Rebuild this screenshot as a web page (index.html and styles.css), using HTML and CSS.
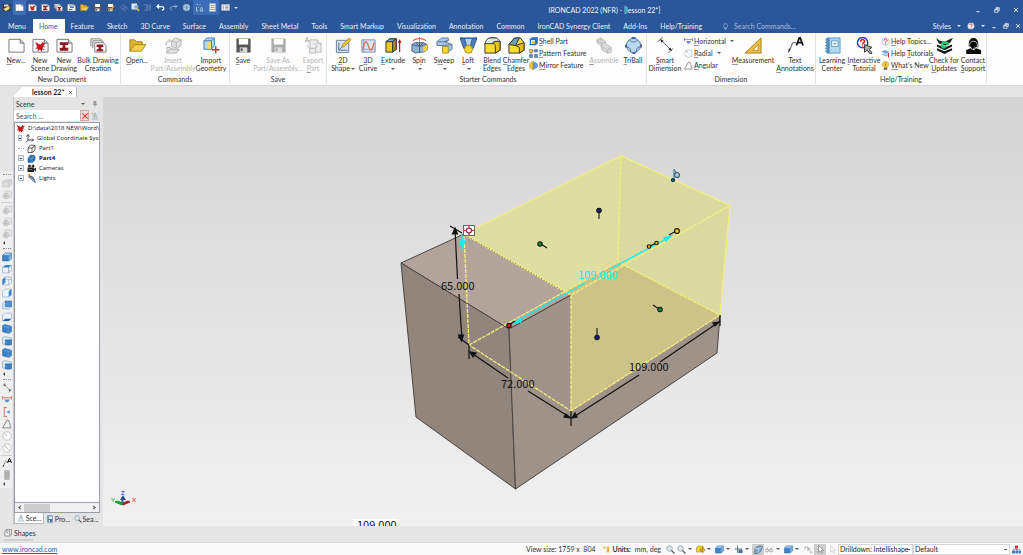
FILE: index.html
```html
<!DOCTYPE html>
<html lang="en">
<head>
<meta charset="utf-8">
<title>IRONCAD 2022 (NFR) - [lesson 22*]</title>
<link rel="stylesheet" href="styles.css">
</head>
<body>
<svg class="defs" aria-hidden="true">
  <symbol id="page" viewBox="0 0 18 18"><path d="M1 2.500h12l4 4v9.500H1z" fill="#fff" stroke="#777"/><path d="M13 2.500v4h4" fill="#ddd" stroke="#666"/></symbol>
  <symbol id="bird" viewBox="0 0 18 18"><path d="M1 1l6 4 3 1 3-4 2 2 3-1-2 3-2 3-1 3 4 3-5-1-1 3-2-3-4 3 1-4-5-1 4-2-3-2 3 0z" fill="#d01818"/><path d="M2 5l5 3M10 12l2 5M12 9l5 1" stroke="#501010" fill="none"/></symbol>
  <symbol id="nscene" viewBox="0 0 18 18"><use href="#page"/><svg x="2" y="4" width="13" height="12"><use href="#bird"/></svg></symbol>
  <symbol id="ndraw" viewBox="0 0 18 18"><use href="#page"/><path d="M4 5.500h9v3h-3v3h3v3H4v-3h3v-3H4z" fill="#901a22"/></symbol>
  <symbol id="bulk" viewBox="0 0 18 18"><path d="M1 10V2h10l3 3" fill="#fff" stroke="#777"/><path d="M3 12V4h9l3 3" fill="#fff" stroke="#777"/><path d="M5 16V6h9l3 3v7z" fill="#fff" stroke="#777"/><path d="M7 8h7v2.500h-2V13h2v2H7v-2h2v-2.500H7z" fill="#901a22"/></symbol>
  <symbol id="open" viewBox="0 0 18 18"><path d="M1 15V3h5l2 2h6v3" fill="#e0b52c" stroke="#a8841a"/><path d="M1 15l5-7h12l-5 7z" fill="#f5d04a" stroke="#a8841a"/></symbol>
  <symbol id="insert" viewBox="0 0 18 18"><g fill="#e2e2e2" stroke="#b4b4b4"><path d="M7 4l4-3 6 2v6l-4 3-6-2z"/><path d="M7 4l5 2v5M12 6l5-3M1 9c0-4 1-5 4-5M4 2l2 2-2 2M2 17v-6h4l2 2h4v1M2 17l3-4h10l-3 4z"/></g></symbol>
  <symbol id="import" viewBox="0 0 18 18"><path d="M1 4l3-3h8v8l-3 4H1z" fill="#b9d7ee" stroke="#3d7cb0"/><path d="M1 4h8v9M9 4l3-3" fill="none" stroke="#3d7cb0"/><path d="M5 5h3.500v7.500H5z" fill="#f7de63"/><path d="M13.500 9.500v8M9.500 13.500h8" stroke="#b43a3a" stroke-width="1.500"/></symbol>
  <symbol id="save" viewBox="0 0 18 18"><path d="M1.500 1.500h14l1 1v14h-15z" fill="#555"/><path d="M4 2h10v6H4z" fill="#fff"/><path d="M5 11h8v5.500H5z" fill="#ddd"/><path d="M6 12h2v3H6z" fill="#555"/></symbol>
  <symbol id="saveg" viewBox="0 0 18 18"><path d="M1.500 1.500h14l1 1v14h-15z" fill="#aaa"/><path d="M4 2h10v6H4z" fill="#fff"/><path d="M5 11h8v5.500H5z" fill="#ddd"/><path d="M6 12h2v3H6z" fill="#aaa"/></symbol>
  <symbol id="export" viewBox="0 0 18 18"><g fill="#eee" stroke="#b8b8b8"><path d="M5 3h8l4 4v9H6z"/><path d="M5 12v5h6v-5zM13 3v4h4M3 8c0 3 0 4 3 4M0 6l2-6 2 6M1 4h3M9 6l4 4-3 2"/></g></symbol>
  <symbol id="shape2d" viewBox="0 0 18 18"><path d="M1.500 3.500h13v13h-13z" fill="#d4e2f1" stroke="#667d98"/><path d="M4 6v8h9M4 14l5-5" fill="none" stroke="#58728f"/><path d="M7 11l1-3 7-7 2 2-7 7z" fill="#f1c232" stroke="#9a7a28" stroke-width=".7"/></symbol>
  <symbol id="curve" viewBox="0 0 18 18"><path d="M2 3h14v13H2z" fill="#d9e4f5" stroke="#7b8fb6"/><path d="M4 3v13M2 13h14" stroke="#8fa3c8"/><path d="M3 13c2-10 4-10 6-3s4 4 6-4" fill="none" stroke="#e2684a" stroke-width="1.300"/></symbol>
  <symbol id="extrude" viewBox="0 0 18 18"><path d="M1 5l4-3h7v11l-4 3H1z" fill="#efc71d" stroke="#333"/><path d="M1 5l4-3h7l-4 3z" fill="#74a6d8" stroke="#333"/><path d="M8 5l4-3v11l-4 3z" fill="#a8871d" stroke="#333"/><path d="M15.500 16V5" stroke="#c00" stroke-width="1.200"/><path d="M13.500 6l2-4 2 4z" fill="#c00"/></symbol>
  <symbol id="spin" viewBox="0 0 18 18"><path d="M1 8l4-2h8l4 2v6l-4 2H9l-4 1-4-2z" fill="#8fb3d8" stroke="#4a5f78"/><path d="M1 8l8 2 8-2M9 6v11M5 6l4 4 4-4" fill="none" stroke="#4a5f78"/><path d="M13 10l4-2v6l-4 2z" fill="#f5d52c"/><path d="M2 4c3-3 11-3 14 0" fill="none" stroke="#b03030"/><path d="M9 0v5" stroke="#888"/></symbol>
  <symbol id="sweep" viewBox="0 0 18 18"><path d="M1 5l5-4h7v3l-4 1 8 3v5l-5 3H7V9L1 9z" fill="#a9c7e4" stroke="#5a7796"/><path d="M7 9l10-1M1 5h7l5-1" fill="none" stroke="#5a7796"/><path d="M7 10h6v7H7z" fill="#f7d92f" stroke="#a98f20"/></symbol>
  <symbol id="loft" viewBox="0 0 18 18"><path d="M0 1h18l-4 11H4z" fill="#4c82bd" stroke="#2d5179"/><path d="M5 2h8l-2 8H7z" fill="#b7d3ec"/><path d="M0 1l5 1 2 8M18 1l-5 1-2 8" fill="none" stroke="#31577f"/><circle cx="9" cy="13" r="4.200" fill="#f8d931" stroke="#9d8519"/></symbol>
  <symbol id="blend" viewBox="0 0 18 18"><path d="M1 7l5-6h7l4 4v9l-5 3H1z" fill="#f8dc2e" stroke="#333"/><path d="M1 7c1-4 3-6 6-6h6c2 1 3 2 4 4-5-1-8 0-8 2z" fill="#dbe9f7" stroke="#333"/><path d="M9 7c3 0 3 1 3 4v6l5-3V5c-4-1-7 0-8 2z" fill="#e6c414" stroke="#333"/></symbol>
  <symbol id="chamfer" viewBox="0 0 18 18"><path d="M1 8l6-7h6l4 5v8l-5 3H1z" fill="#f8dc2e" stroke="#333"/><path d="M1 8l6-7h5L8 9z" fill="#6e9dce" stroke="#333"/><path d="M8 9l9-3v8l-5 3v-6z" fill="#e1bd15" stroke="#333"/></symbol>
  <symbol id="shell" viewBox="0 0 18 18"><path d="M2 4l4-3h11v12l-4 3H2z" fill="#2f74b8" stroke="#28598a"/><path d="M4 6h8v8H4z" fill="#dcecf8"/><path d="M6 8h6v6H6z" fill="#f0c828"/></symbol>
  <symbol id="pattern" viewBox="0 0 18 18"><path d="M1 1h6v6H1z" fill="#f6cf38" stroke="#555"/><path d="M11 1h6v5h-6zM1 11h6v6H1zM11 11h6v6h-6z" fill="#5c8dc6" stroke="#3c5b80"/><path d="M7 4h4M4 7v4" stroke="#444"/></symbol>
  <symbol id="mirror" viewBox="0 0 18 18"><path d="M8 1v16c-5 0-7-4-7-8s2-7 7-8z" fill="#f2c735" stroke="#a48125"/><path d="M10 3c5 0 7 2 7 6s-2 6-7 6z" fill="#68a0dc" stroke="#3c6ea4"/><path d="M9 0v18" stroke="#456"/></symbol>
  <symbol id="assemble" viewBox="0 0 18 18"><g fill="#dcdcdc" stroke="#b4b4b4"><path d="M1 3l4-2 5 4v2l6 4v5l-4 1-6-4v-3L1 6z"/><path d="M1 3l5 4 4-2M6 7v3l6 4 4-3M12 14v3M5 1v3"/></g></symbol>
  <symbol id="triball" viewBox="0 0 18 18"><circle cx="9" cy="9" r="7.500" fill="#b9d8f2" stroke="#4a7196"/><path d="M5 3c1 3 7 3 8 0M2 11c3-1 4 2 4 5M16 11c-3-1-4 2-4 5" fill="none" stroke="#4a7196"/><path d="M7 0h4v2H7zM0 8h2v3H0zM16 8h2v3h-2zM8 16h3v2H8z" fill="#3f6890"/></symbol>
  <symbol id="smart" viewBox="0 0 18 18"><path d="M4 3l11 11M1 5l5-5M12 17l5-5" stroke="#555"/><path d="M3 2l4 2-2 2zM16 15l-4-2 2-2z" fill="#222"/></symbol>
  <symbol id="horiz" viewBox="0 0 18 18"><path d="M1 2v6M17 2v6M1 5h16" stroke="#d86a58" stroke-width="1.600"/><path d="M4 8h10l-3 5H7z" fill="#5d90c9"/></symbol>
  <symbol id="vert" viewBox="0 0 18 18"><path d="M3 1h6M3 17h6M4 1v16" stroke="#d86a58" stroke-width="1.600"/><path d="M8 9l6-3v6z" fill="#5d90c9"/></symbol>
  <symbol id="radial" viewBox="0 0 18 18"><circle cx="9" cy="9" r="7.500" fill="#fff" stroke="#999"/><path d="M9 9L4 4" stroke="#777"/></symbol>
  <symbol id="diam" viewBox="0 0 18 18"><circle cx="9" cy="9" r="7.500" fill="#fff" stroke="#999"/><path d="M14 14L4 4" stroke="#777"/></symbol>
  <symbol id="angle" viewBox="0 0 18 18"><path d="M1 16L9 2l4 1M1 16h16M12 4c2 3 3 7 3 11" fill="none" stroke="#777" stroke-width="1.500"/></symbol>
  <symbol id="measure" viewBox="0 0 18 18"><path d="M0 17L17 1v16z" fill="#eebf41" stroke="#a97d1c"/><path d="M8 14l6-6v6z" fill="#fff" stroke="#b98d2c"/></symbol>
  <symbol id="annot" viewBox="0 0 18 18"><path d="M2 16L6 6h4" fill="none" stroke="#555"/><path d="M1 17l1-5 2 1z" fill="#333"/><path d="M10 9l3-8h1l3 8M11 6h5" fill="none" stroke="#111" stroke-width="1.800"/></symbol>
  <symbol id="book" viewBox="0 0 18 18"><path d="M3 1h14v16H3z" fill="#b2d7ee" stroke="#5c98bd"/><path d="M3 1h3v16H3z" fill="#528eb8"/><path d="M8 4h7v6H8z" fill="#eaf6fc" stroke="#6ba3c5"/><path d="M10 7h3M1 3h3M1 6h3M1 9h3M1 12h3M1 15h3" stroke="#498bba"/></symbol>
  <symbol id="tutor" viewBox="0 0 18 18"><circle cx="7" cy="6" r="5.500" fill="#fff" stroke="#2934cf" stroke-width="1.500"/><path d="M5 5c0-3 4-3 4 0 0 1-2 1-2 3M7 9v1" fill="none" stroke="#e01818" stroke-width="1.600"/><path d="M9 8l8 3-3 2 3 4-2 1-3-4-3 2z" fill="#aaa" stroke="#333"/></symbol>
  <symbol id="help" viewBox="0 0 18 18"><circle cx="9" cy="9" r="7.500" fill="#eef5fb" stroke="#85a9c8"/><path d="M6 7c0-4 6-4 6 0 0 2-3 2-3 4M9 13v2" fill="none" stroke="#d33" stroke-width="2"/></symbol>
  <symbol id="cap" viewBox="0 0 18 18"><path d="M0 5l8-3 10 4-8 4z" fill="#75a8dc"/><path d="M3 8l7 3 5-2v4l-5 2-7-3z" fill="#9cc3e8"/><path d="M15 8v9" stroke="#c33" stroke-width="2"/></symbol>
  <symbol id="bulb" viewBox="0 0 18 18"><path d="M6 13C0 8 3 1 9 1s9 7 3 12z" fill="#f6ce28" stroke="#a37f13"/><path d="M9 4v6M6 14h6v3H6z" stroke="#555" fill="#777"/></symbol>
  <symbol id="check" viewBox="0 0 18 18"><path d="M1 8l8 3 8-3v2l-8 4-8-4zM1 12l8 3 8-3v2l-8 4-8-4z" fill="#141414"/><path d="M0 1l4 3 5 1 6-3 3-1-3 5-5 3-7-2z" fill="#222"/><path d="M5 9c0-6 8-6 9-1l-2 1c-1-2-4-2-5 0h5c-1 4-6 5-7 0z" fill="#22c56a"/></symbol>
  <symbol id="contact" viewBox="0 0 18 18"><path d="M4 7c0-8 10-8 10 0v4h-2c-2 3-5 2-6-1H4zM1 18v-4l5-2 3 2 3-2 5 2v4z" fill="#080808"/><path d="M5 9c-1-6 9-6 8 0v2l-4 1M1 18v-3" stroke="#fff" stroke-width=".8" fill="none"/></symbol>
  <symbol id="cube" viewBox="0 0 18 18"><path d="M1 6l5-4h11v10l-5 4H1z" fill="#3c83cb" stroke="#2b639e"/><path d="M1 6l5-4h11l-5 4z" fill="#b7d7f2" stroke="#4c81b2"/><path d="M12 6l5-4v10l-5 4z" fill="#78addd"/></symbol>
  <symbol id="cubetop" viewBox="0 0 18 18"><path d="M1 6h11v10H1zM12 6l5-4v10l-5 4z" fill="#edf4fa" stroke="#7ba0c4"/><path d="M1 6l5-4h11l-5 4z" fill="#3c83cb"/></symbol>
  <symbol id="cubeleft" viewBox="0 0 18 18"><path d="M1 6l5-4h11v10l-5 4H1z" fill="#edf4fa" stroke="#7ba0c4"/><path d="M12 16V6h5M5 6h7" fill="none" stroke="#7ba0c4"/><path d="M1 6l5-4v10l-5 4z" fill="#3c83cb"/></symbol>
  <symbol id="cuberight" viewBox="0 0 18 18"><path d="M1 6l5-4h11v10l-5 4H1z" fill="#edf4fa" stroke="#7ba0c4"/><path d="M12 6l5-4v10l-5 4z" fill="#3c83cb"/></symbol>
  <symbol id="cubeback" viewBox="0 0 18 18"><path d="M1 6l5-4h11v10l-5 4H1z" fill="#d9e8f5" stroke="#7ba0c4"/><path d="M6 2h11v10H6z" fill="#4c8fd3" stroke="#2b639e"/></symbol>
  <symbol id="cubebot" viewBox="0 0 18 18"><path d="M1 6l5-4h11v10l-5 4H1z" fill="#edf4fa" stroke="#7ba0c4"/><path d="M1 16l5-4h11l-5 4z" fill="#245fa3"/></symbol>
  <symbol id="cubeiso" viewBox="0 0 18 18"><path d="M1 3l4-2 12 3v10l-5 3-11-3z" fill="#3a82cc" stroke="#27619d"/><path d="M1 3l10 3 6-2M11 6v11" fill="none" stroke="#7bb1e5"/></symbol>
  <symbol id="cubemix" viewBox="0 0 18 18"><path d="M1 3l5-2 11 3v10l-5 3-11-3z" fill="#dbe9f6" stroke="#6b93b9"/><path d="M6 7h11v9H6z" fill="#3a82cc" stroke="#27619d"/></symbol>
  <symbol id="cubegray" viewBox="0 0 18 18"><path d="M1 7l5-4h11v9l-5 4H1z" fill="#dedede" stroke="#b8b8b8"/><path d="M1 7h11l5-4M12 7v9" fill="none" stroke="#b8b8b8"/></symbol>
  <symbol id="gearg" viewBox="0 0 18 18"><path d="M6 2h11v11H6z" fill="#e6e6e6" stroke="#bbb"/><circle cx="7" cy="11" r="5" fill="#ddd" stroke="#aaa"/><path d="M7 8v6M4 11h6" stroke="#999"/></symbol>
  <symbol id="ysolid" viewBox="0 0 18 18"><path d="M1 5l4-3h9v8l-4 4H1z" fill="#f5cf2b" stroke="#9b7c15"/><path d="M9 8h4V4l5 6-5 6v-4H9z" fill="#e7ae1b" stroke="#7c6313"/></symbol>
  <symbol id="lens" viewBox="0 0 18 18"><circle cx="7" cy="7" r="5.500" fill="#dce8ef" stroke="#8b9aa5" stroke-width="1.500"/><path d="M11 11l6 6" stroke="#555" stroke-width="2.500"/></symbol>
  <symbol id="tri" viewBox="0 0 18 18"><path d="M9 2L3 16h12zM6 9h6M9 2v14" fill="none" stroke="#8dadc6" stroke-width="1.500"/></symbol>
  <symbol id="axes" viewBox="0 0 18 18"><path d="M6 2v10h11M6 12l-4 5M3 5l3-4 3 4M14 9l3 3-3 3" fill="none" stroke="#333" stroke-width="1.800"/></symbol>
  <symbol id="part" viewBox="0 0 18 18"><path d="M2 8l5-6 9 1v9l-5 5H2zM2 8h8l6-5M10 8v9" fill="#fff" stroke="#333" stroke-width="1.600"/></symbol>
  <symbol id="partb" viewBox="0 0 18 18"><path d="M2 8l5-6 9 1v9l-5 5H2z" fill="#2870b8" stroke="#174a80"/><path d="M2 8h8l6-5M10 8v9" fill="none" stroke="#9cc7ee"/></symbol>
  <symbol id="cam" viewBox="0 0 18 18"><path d="M1 7h13v9H1zM14 10l4-3v8l-4-3z" fill="#222"/><circle cx="5" cy="4" r="3" fill="#333"/><circle cx="12" cy="4" r="3" fill="#333"/><path d="M3 11h8" stroke="#aaa"/></symbol>
  <symbol id="light" viewBox="0 0 18 18"><path d="M5 3l8 4 4 10-5-3-7-7z" fill="#4f86b7" stroke="#333"/><path d="M1 1l5 3M1 6h3M5 0v3" stroke="#e26c20" stroke-width="1.800"/><path d="M8 8l6 6" stroke="#eee"/></symbol>
  <symbol id="cursor" viewBox="0 0 18 18"><path d="M5 1v14l3-3 3 5 2-1-3-5h5z" fill="#fff" stroke="#555"/></symbol>
  <symbol id="undo" viewBox="0 0 18 18"><path d="M2 7h9c6 0 6 7 1 7M6 3L2 7l4 4" fill="none" stroke="currentColor" stroke-width="2.500"/></symbol>
  <symbol id="link" viewBox="0 0 18 18"><path d="M3 9l6-6 4 4-6 6zM8 13l6-6 3 3-6 6z" fill="none" stroke="#5f7fb0" stroke-width="2"/></symbol>
  <symbol id="globe" viewBox="0 0 18 18"><circle cx="9" cy="9" r="7" fill="#b8d4eb" stroke="#6d98c4"/><path d="M2 9h14M9 2v14M4 4c4 4 7 4 10 0M4 14c4-4 7-4 10 0" fill="none" stroke="#5880ac"/></symbol>
  <symbol id="list" viewBox="0 0 18 18"><path d="M3 1h12v16H3z" fill="#eef2f5" stroke="#aaa"/><path d="M5 5h8M5 9h8M5 13h8" stroke="#8c7c55" stroke-width="1.500"/></symbol>
  <symbol id="pin" viewBox="0 0 18 18"><path d="M5 2h8M6 2v7M11 2v7M3 10h12M9 10v7" fill="none" stroke="#666" stroke-width="2"/></symbol>
  <symbol id="restore" viewBox="0 0 18 18"><path d="M2 7h10v9H2zM6 6V2h10v9h-4M6 4h10M2 9h10" fill="none" stroke="#fff" stroke-width="2"/></symbol>
  <symbol id="x" viewBox="0 0 18 18"><path d="M3 3l12 12M15 3L3 15" stroke="currentColor" stroke-width="2.500"/></symbol>
  <symbol id="min" viewBox="0 0 18 18"><path d="M4 14h10" stroke="#fff" stroke-width="2.500"/></symbol>
  <symbol id="org" viewBox="0 0 18 18"><path d="M6 1h6v6H6z" fill="#d33"/><path d="M0 11h6v6H0zM7 11h5v6H7zM13 11h5v6h-5z" fill="#3e78c0"/><path d="M9 7v4M3 11V9h12v2" stroke="#555" fill="none"/></symbol>
</svg>

<div class="app">
  <header class="titlebar">
    <nav class="qat" aria-label="Quick access">
      <button aria-label="IronCAD"><svg viewBox="0 0 18 18"><path d="M1 2h16v14H1z" fill="#353535"/><path d="M4 3h9v4H4z" fill="#ddd"/><path d="M2 12l13-6v6l-7 4z" fill="#e9e083"/></svg></button>
      <button class="lit" aria-label="New"><svg><use href="#page"/></svg></button>
      <button aria-label="New scene"><svg><use href="#nscene"/></svg></button>
      <button aria-label="New drawing"><svg><use href="#ndraw"/></svg></button>
      <button aria-label="Bulk drawing"><svg><use href="#bulk"/></svg></button>
      <button aria-label="Translate"><svg viewBox="0 0 18 18"><use href="#page"/><path d="M4 6h8M6 9h8M4 13h7" stroke="#2b75c2" stroke-width="2"/></svg></button>
      <button aria-label="Open"><svg><use href="#open"/></svg></button>
      <button aria-label="Save"><svg><use href="#save"/></svg></button>
      <button aria-label="Save as"><svg viewBox="0 0 18 18"><use href="#save"/><path d="M8 14l7-9 2 2-7 8z" fill="#e2a63a"/></svg></button>
      <button class="tight" aria-label="Link"><svg><use href="#link"/></svg></button>
      <button class="tight" aria-label="Find"><svg viewBox="0 0 18 18"><path d="M1 1h11v12H1z" fill="#d9eaf8"/><circle cx="10" cy="8" r="4" fill="#6fa5d6" stroke="#dbe8f5"/><path d="M12 11l4 5" stroke="#e6c340" stroke-width="3"/></svg></button>
      <button class="dim" aria-label="Edit"><svg viewBox="0 0 18 18"><path d="M2 3h5v12H2M8 4h7v10H8zM9 7h5M9 10h5" fill="none" stroke="#8aa0c4" stroke-width="2"/></svg></button>
      <button aria-label="Undo"><svg><use href="#undo"/></svg></button>
      <button class="dim" aria-label="Redo"><svg viewBox="0 0 18 18"><path d="M16 7H7c-6 0-6 7-1 7M12 3l4 4-4 4" fill="none" stroke="currentColor" stroke-width="2"/></svg></button>
      <button aria-label="TriBall"><svg><use href="#globe"/></svg></button>
      <button class="lit" aria-label="Scene tree"><svg viewBox="0 0 18 18"><path d="M3 3h3M9 3h2M3 8v8h3M10 16l3-8 3 8zM6 8h2" fill="none" stroke="#a9c3c9" stroke-width="2"/></svg></button>
      <button class="lit" aria-label="Catalog"><svg><use href="#list"/></svg></button>
      <button class="tight" aria-label="Properties"><svg viewBox="0 0 18 18"><path d="M1 3h16v12H1z" fill="#eee" stroke="#bbb"/><path d="M3 6h3M8 6h7M3 9h3M8 9h7M3 12h3M8 12h7" stroke="#789" stroke-width="1.500"/></svg></button>
      <button class="more" aria-label="More"><i class="caret"></i></button>
    </nav>
    <h1>IRONCAD 2022 (NFR) - [lesson 22*]</h1>
    <div class="wincontrols">
      <button aria-label="Minimize"><svg><use href="#min"/></svg></button>
      <button aria-label="Restore"><svg><use href="#restore"/></svg></button>
      <button aria-label="Close"><svg><use href="#x"/></svg></button>
    </div>
  </header>

  <nav class="tabs" aria-label="Ribbon tabs">
    <button>Menu</button><button class="active">Home</button><button>Feature</button><button>Sketch</button><button>3D Curve</button><button>Surface</button><button>Assembly</button><button>Sheet Metal</button><button>Tools</button><button>Smart Markup</button><button>Visualization</button><button>Annotation</button><button>Common</button><button>IronCAD Synergy Client</button><button>Add-Ins</button><button>Help/Training</button>
    <label class="cmd"><svg viewBox="0 0 18 18"><path d="M6 12C1 6 5 2 9 2s8 4 3 10zM6 14h6M7 17h4" fill="none" stroke="#b5c3dc" stroke-width="1.500"/></svg><input type="text" placeholder="Search Commands..." aria-label="Search Commands"></label>
    <div class="tabright">
      <button>Styles</button><i class="caret"></i>
      <button aria-label="Help"><svg><use href="#help"/></svg></button><i class="caret"></i>
      <button aria-label="Minimize document"><svg><use href="#min"/></svg></button>
      <button aria-label="Restore document"><svg><use href="#restore"/></svg></button>
      <button aria-label="Close document"><svg><use href="#x"/></svg></button>
    </div>
  </nav>

  <section class="ribbon" aria-label="Home">
    <div class="group first"><div class="tools">
      <button class="tool w24"><svg><use href="#page"/></svg><span><u>N</u>ew...</span></button>
      <button class="tool w24"><svg><use href="#nscene"/></svg><span>New<br>Scene</span></button>
      <button class="tool w24"><svg><use href="#ndraw"/></svg><span>New<br>Drawing</span></button>
      <button class="tool w44"><svg><use href="#bulk"/></svg><span>Bulk Drawing<br>Creation</span></button>
    </div><h2>New Document</h2></div>
    <div class="group"><div class="tools">
      <button class="tool w32"><svg><use href="#open"/></svg><span><u>O</u>pen...</span></button>
      <button class="tool w40" disabled><svg><use href="#insert"/></svg><span>Insert<br>Part/Assembly</span></button>
      <button class="tool w36"><svg><use href="#import"/></svg><span>Import<br>Geometry</span></button>
    </div><h2>Commands</h2></div>
    <div class="group"><div class="tools">
      <button class="tool w26"><svg><use href="#save"/></svg><span><u>S</u>ave</span></button>
      <button class="tool w44" disabled><svg><use href="#saveg"/></svg><span>Save As<br>Part/Assembly...</span></button>
      <button class="tool w26" disabled><svg><use href="#export"/></svg><span>Export<br><u>P</u>art</span></button>
    </div><h2>Save</h2></div>
    <div class="group starter"><div class="tools">
      <button class="tool w26"><svg><use href="#shape2d"/></svg><span><u>2</u>D<br>Shape<i class="caret"></i></span></button>
      <button class="tool w24"><svg><use href="#curve"/></svg><span><u>3</u>D<br>Curve</span></button>
      <button class="tool w26"><svg><use href="#extrude"/></svg><span><u>E</u>xtrude<br><i class="caret"></i></span></button>
      <button class="tool w26"><svg><use href="#spin"/></svg><span>Sp<u>i</u>n<br><i class="caret"></i></span></button>
      <button class="tool w24"><svg><use href="#sweep"/></svg><span>S<u>w</u>eep<br><i class="caret"></i></span></button>
      <button class="tool w24"><svg><use href="#loft"/></svg><span><u>L</u>oft<br><i class="caret"></i></span></button>
      <button class="tool w24"><svg><use href="#blend"/></svg><span><u>B</u>lend<br>Edges</span></button>
      <button class="tool w24"><svg><use href="#chamfer"/></svg><span><u>C</u>hamfer<br>Edges</span></button>
      <div class="stack w60">
        <button><svg><use href="#shell"/></svg><span><u>S</u>hell Part</span></button>
        <button><svg><use href="#pattern"/></svg><span><u>P</u>attern Feature</span></button>
        <button><svg><use href="#mirror"/></svg><span><u>M</u>irror Feature</span></button>
      </div>
      <button class="tool w32" disabled><svg><use href="#assemble"/></svg><span><u>A</u>ssemble</span></button>
      <button class="tool w26"><svg><use href="#triball"/></svg><span><u>T</u>riBall</span></button>
    </div><h2>Starter Commands</h2></div>
    <div class="group"><div class="tools">
      <button class="tool w36"><svg><use href="#smart"/></svg><span><u>S</u>mart<br>Dimension</span></button>
      <div class="stack w48">
        <button><svg><use href="#horiz"/></svg><span><u>H</u>orizontal</span><i class="caret"></i></button>
        <button><svg><use href="#radial"/></svg><span><u>R</u>adial</span><i class="caret"></i></button>
        <button><svg><use href="#angle"/></svg><span><u>A</u>ngular</span></button>
      </div>
      <button class="tool w44"><svg><use href="#measure"/></svg><span><u>M</u>easurement</span></button>
      <button class="tool w40"><svg><use href="#annot"/></svg><span>Text<br><u>A</u>nnotations</span></button>
    </div><h2>Dimension</h2></div>
    <div class="group"><div class="tools">
      <button class="tool w32"><svg><use href="#book"/></svg><span>Learning<br>Center</span></button>
      <button class="tool w32"><svg><use href="#tutor"/></svg><span><u>I</u>nteractive<br>Tutorial</span></button>
      <div class="stack w48">
        <button><svg><use href="#help"/></svg><span><u>H</u>elp Topics...</span></button>
        <button><svg><use href="#cap"/></svg><span>Help <u>T</u>utorials</span></button>
        <button><svg><use href="#bulb"/></svg><span><u>W</u>hat's New</span></button>
      </div>
      <button class="tool w32"><svg><use href="#check"/></svg><span>Check for<br><u>U</u>pdates</span></button>
      <button class="tool w26"><svg><use href="#contact"/></svg><span>Contact<br><u>S</u>upport</span></button>
    </div><h2>Help/Training</h2></div>
  </section>

  <div class="doctabs"><div class="doctab"><span>lesson 22*</span><button aria-label="Close tab"><svg><use href="#x"/></svg></button></div></div>

  <main class="work">
    <aside class="sidebar" aria-label="View tools">
      <i class="grip"></i>
      <button aria-label="Box"><svg><use href="#cubegray"/></svg></button>
      <button aria-label="Unite"><svg><use href="#gearg"/></svg></button>
      <hr>
      <button aria-label="Subtract"><svg><use href="#gearg"/></svg></button>
      <button aria-label="Intersect"><svg><use href="#gearg"/></svg></button>
      <button aria-label="Split"><svg><use href="#gearg"/></svg></button>
      <i class="left"></i><i class="grip"></i>
      <button aria-label="Front"><svg><use href="#cube"/></svg></button>
      <button aria-label="Top"><svg><use href="#cubetop"/></svg></button>
      <button aria-label="Left"><svg><use href="#cubeleft"/></svg></button>
      <button aria-label="Right"><svg><use href="#cuberight"/></svg></button>
      <button aria-label="Back"><svg><use href="#cubeback"/></svg></button>
      <button aria-label="Bottom"><svg><use href="#cubebot"/></svg></button>
      <button aria-label="Isometric 1"><svg><use href="#cubeiso"/></svg></button>
      <button aria-label="Isometric 2"><svg><use href="#cubemix"/></svg></button>
      <button aria-label="Isometric 3"><svg><use href="#cubeiso"/></svg></button>
      <button aria-label="Isometric 4"><svg><use href="#cubemix"/></svg></button>
      <i class="left"></i><i class="grip"></i>
      <button aria-label="Smart dimension"><svg><use href="#smart"/></svg></button>
      <button aria-label="Horizontal"><svg><use href="#horiz"/></svg></button>
      <button aria-label="Vertical"><svg><use href="#vert"/></svg></button>
      <button aria-label="Angular"><svg><use href="#angle"/></svg></button>
      <button aria-label="Radial"><svg><use href="#radial"/></svg></button>
      <button aria-label="Diameter"><svg><use href="#diam"/></svg></button>
      <hr>
      <button aria-label="Text"><svg><use href="#annot"/></svg></button>
      <button aria-label="Block"><svg viewBox="0 0 18 18"><path d="M5 1h8v16H5z" fill="#bbb" stroke="#999"/><path d="M5 5h8M5 9h8M5 13h8" stroke="#999"/></svg></button>
      <i class="left"></i>
    </aside>

    <aside class="panel">
      <div class="phead"><h2>Scene</h2><i class="caret"></i><svg><use href="#pin"/></svg></div>
      <div class="psearch"><input type="text" placeholder="Search ..." aria-label="Search scene"><button class="clear" aria-label="Clear"><svg><use href="#x"/></svg></button><button aria-label="Filter"><svg viewBox="0 0 18 18"><use href="#tri"/><path d="M1 4h4M3 2v4" stroke="#e2a63a" stroke-width="1.500"/></svg></button></div>
      <ul class="tree">
        <li class="root"><svg><use href="#bird"/></svg>D:\data\2018 NEW\Word\</li>
        <li><b class="exp"></b><svg><use href="#axes"/></svg>Global Coordinate System</li>
        <li><b class="leaf"></b><svg><use href="#part"/></svg>Part1</li>
        <li><b class="exp"></b><svg><use href="#partb"/></svg><strong>Part4</strong></li>
        <li><b class="exp"></b><svg><use href="#cam"/></svg>Cameras</li>
        <li><b class="exp"></b><svg><use href="#light"/></svg>Lights</li>
      </ul>
      <div class="hscroll"><i class="arr l"></i><i class="thumb"></i><i class="arr r"></i></div>
      <div class="ptabs">
        <button class="active"><svg><use href="#tri"/></svg>Sce...</button>
        <button><svg viewBox="0 0 18 18"><path d="M3 1h12v16H3z" fill="#4678a8"/><path d="M6 3h8v6H6z" fill="#dfeefa"/><path d="M6 11h3v4H6z" fill="#fff"/></svg>Pro...</button>
        <button><svg><use href="#lens"/></svg>Sea...</button>
      </div>
    </aside>

    <section class="viewport" aria-label="3D view">
      <svg viewBox="103 97 920 429" preserveAspectRatio="xMidYMid meet">
        <g stroke="#4a4542" stroke-width="1" stroke-linejoin="round">
          <path d="M401 263L464 234 571 295 509 329z" fill="#b2a49a"/>
          <path d="M401 263L509 329 515.500 489 416 417z" fill="#91857c"/>
          <path d="M509 329L571 295 720 315 717 353 515.500 489z" fill="#9f9288"/>
        </g>
        <path d="M464 234L621 156 730 205.500 720 315 571 411V295z" fill="#dedea3"/>
        <path d="M621 156L730 205.500 720 315 618 262z" fill="#dadaa0"/>
        <path d="M562 293L618 262 720 315 571 411V295z" fill="#ccc387"/>
        <g fill="none" stroke="#f3ef7c" stroke-width="1.300">
          <path d="M464 234L621 156 730 205.500 720 315"/>
          <path d="M621 156L618 262 720 315 571 411V295L730 205.500M464 234L469 345 571 411M469 345L618 262" stroke-dasharray="4 1"/>
          <path d="M464 234L571 295" stroke-width="2" stroke-dasharray="2 1"/>
        </g>
        <g stroke="#14eef0" stroke-width="1.400" fill="#14eef0">
          <path d="M513 323L585 283M610 269L668 238M462 235v10"/>
          <path d="M515 323l5-4 1 3zM671 236l-7 2 2 3zM460 241l5 0-3 7z"/>
        </g>
        <g stroke="#111" stroke-width="1.200" fill="#111">
          <path d="M455 229L457.500 279M459 294L462 340M450 226l12 7M458 337l11 8M469 345v14M470 352L508 378M528 391L571 418M571 411v15M572 418L639 375M660 362L719 322M720 315v11"/>
          <path d="M455 228l2.500 6h-5zM461.500 341l-3-6h5zM470 352l3 5 3-4zM570 418l-6-1 2-3zM572 418l3-5 2 4zM719 322l-6 1 2 3z"/>
        </g>
        <g class="dims">
          <text x="441" y="290">65.000</text><text x="501" y="388">72.000</text><text x="629" y="371">109.000</text><text x="578" y="279" class="cyan">109.000</text>
        </g>
        <g stroke="#15151a" stroke-width="1.100">
          <path d="M599 211v8M541 244l6 4M597 336v-8M659 309l-6-4M650 246l6-3M669 235l7-4M509 325l6-4"/>
          <circle cx="599" cy="210.500" r="2.200" fill="#1c1790"/><circle cx="540" cy="244" r="2.200" fill="#158a39"/><circle cx="597" cy="337.500" r="2.200" fill="#1c1790"/><circle cx="660" cy="309.500" r="2.200" fill="#158a39"/>
          <circle cx="649" cy="246.500" r="1.800" fill="#efae18"/><circle cx="656.500" cy="243" r="1.800" fill="#efae18"/><circle cx="677" cy="231" r="2.400" fill="#f4ce22"/><circle cx="509" cy="325.500" r="2.200" fill="#cb171c"/><circle cx="673" cy="180" r="1.500" fill="#167b86"/>
        </g>
        <path d="M674 179v-10l5 9" fill="none" stroke="#277d94"/><circle cx="677" cy="175" r="2.500" fill="#b8c7d5" stroke="#20415f"/>
        <rect x="463.500" y="225.500" width="11" height="10" fill="#fff" stroke="#666"/><circle cx="469" cy="230.500" r="2.500" fill="none" stroke="#444" stroke-width="1.200"/><path d="M469 226v3M469 232v3M464 230.500h3M471 230.500h3" stroke="#d02b2b" stroke-width="1.200"/>
        <rect x="353" y="519" width="45" height="7" fill="#fff"/><g class="dims"><text x="357" y="529">109.000</text></g>
        <path d="M122.500 505v-8" stroke="#345fb0" stroke-width="2"/><path d="M120 500l3-5 3 5z" fill="#294d8c"/><path d="M122 505l-7-3 2-1 6 2z" fill="#159c36" stroke="#159c36"/><path d="M123 505l7-3-2-1-5 2z" fill="#a52020" stroke="#a52020"/>
        <g class="axis"><text x="121" y="495" fill="#4a55e0">Z</text><text x="111" y="502" fill="#38b850">Y</text><text x="132" y="502" fill="#e05050">X</text></g>
      </svg>
    </section>
  </main>

  <div class="shapes"><button><svg viewBox="0 0 18 18"><path d="M2 4h11v12H2zM5 4V1h12v12h-4M5 8l4 0" fill="#eee" stroke="#777" stroke-width="1.500"/></svg>Shapes</button></div>

  <footer class="status">
    <a href="#home">www.ironcad.com</a>
    <span class="size">View size: 1759 x&nbsp; 804</span>
    <span class="units"><svg viewBox="0 0 18 18"><path d="M0 2h7v4H0zM10 1h6v16h-6z" fill="#e4b43c"/></svg><b>Units:</b></span>
    <span class="mm">mm, deg</span>
    <div class="sicons">
      <button aria-label="Zoom"><svg><use href="#lens"/></svg></button>
      <button aria-label="Zoom window"><svg><use href="#lens"/></svg><i class="caret"></i></button>
      <button aria-label="Feature"><svg><use href="#ysolid"/></svg><i class="caret"></i></button>
      <button aria-label="View"><svg><use href="#cube"/></svg><i class="caret"></i></button>
      <button aria-label="Move"><svg viewBox="0 0 18 18"><path d="M7 1v15M1 8h15" stroke="#356" stroke-width="1.500"/><path d="M9 9h8v7H9z" fill="#456f9c"/></svg><i class="caret"></i></button>
      <button class="on" aria-label="Perspective"><svg viewBox="0 0 18 18"><path d="M2 7l6-5h9l-3 10-6 5H1z" fill="#7aa8d8" stroke="#345"/><path d="M2 7h8l7-5M10 7l-2 10" fill="none" stroke="#eef"/></svg></button>
      <button aria-label="Glasses"><svg viewBox="0 0 18 18"><path d="M3 8l4-5M11 8l4-5" stroke="#888"/><circle cx="4" cy="11" r="3" fill="none" stroke="#888" stroke-width="1.500"/><circle cx="12" cy="11" r="3" fill="none" stroke="#888" stroke-width="1.500"/></svg><i class="caret"></i></button>
      <button aria-label="Render"><svg><use href="#cube"/></svg><i class="caret"></i></button>
      <button aria-label="Pick"><svg viewBox="0 0 18 18"><path d="M2 4h6v5M2 9V4M8 7l8 8M8 12V7h5M12 16l4-1" fill="none" stroke="#aaa" stroke-width="1.800"/></svg></button>
      <button class="on" aria-label="Select"><svg><use href="#cursor"/></svg></button>
      <button class="dim" aria-label="Filter select"><svg><use href="#cursor"/></svg></button>
    </div>
    <select class="drill" aria-label="Selection mode"><option>Drilldown: Intellishape</option></select>
    <select class="config" aria-label="Configuration"><option>Default</option></select>
    <button class="org" aria-label="Structure"><svg><use href="#org"/></svg></button>
  </footer>
</div>
</body>
</html>
```
FILE: styles.css
```css
* { box-sizing: border-box; }
html, body { height: 100%; margin: 0; }
body { font-family: Lato, "Open Sans", sans-serif; font-size: 7px; line-height: 8px; color: #333; background: #e6e6e6; overflow: hidden; }
button, input, select { font: inherit; color: inherit; border: 0; padding: 0; margin: 0; background: none; }
button { display: flex; align-items: center; justify-content: center; white-space: nowrap; }
h1, h2, ul { margin: 0; padding: 0; font-size: 7px; font-weight: 400; list-style: none; }
svg { display: block; flex: none; }
u { text-underline-offset: 1px; text-decoration-thickness: 1px; text-decoration-color: #999; }
.defs { position: absolute; width: 0; height: 0; }
.app { display: flex; flex-direction: column; height: 100vh; }
.caret { display: inline-block; flex: none; border: 2px solid transparent; border-top-color: #555; border-bottom: 0; vertical-align: middle; margin-left: 1px; }

.titlebar { display: grid; grid-template-columns: 1fr auto 1fr; align-items: center; height: 19px; background: #2b579a; color: #f1f4f9; }
.titlebar h1 { padding-left: 186px; }
.qat { display: flex; height: 15px; align-self: start; }
.qat button { width: 13px; color: #fff; }
.qat .tight { width: 12px; }
.qat .lit { background: #3c6db8; }
.qat .dim { opacity: 0.5; }
.qat svg { width: 9px; height: 9px; }
.qat .more { width: 8px; }
.qat .caret { border-top-color: #dce5f3; }
.wincontrols { display: flex; justify-content: flex-end; gap: 13px; padding-right: 4px; height: 13px; }
.wincontrols svg, .tabright svg { width: 6px; height: 6px; }

.tabs { display: flex; height: 14px; padding-left: 2px; background: #2b579a; color: #e9eef6; }
.tabs > button { padding: 0 7px 0 6px; }
.tabs > .active { background: #fdfdfd; color: #2b67ad; }
.cmd { display: flex; align-items: center; gap: 5px; padding-left: 13px; }
.cmd svg { width: 7px; height: 7px; }
.cmd input { width: 70px; }
.cmd input::placeholder { color: #a9bad6; }
.tabright { display: flex; align-items: center; gap: 6px; margin-left: auto; padding-right: 2px; }
.tabright .caret { border-top-color: #e9eef6; margin: 0; }
.tabright button:nth-of-type(2) svg { width: 8px; height: 8px; }

.ribbon { display: flex; height: 53px; background: #fdfdfd; border-bottom: 1px solid #d5d5d5; }
.group { display: flex; flex-direction: column; border-right: 1px solid #e2e2e2; padding: 4px 0 0; margin-bottom: 1px; }
.group.first { padding-left: 4px; }
.group.starter { padding-left: 3px; }
.group h2 { margin-top: auto; text-align: center; line-height: 10px; }
.tools { display: flex; height: 36px; }
.tool { flex-direction: column; justify-content: flex-start; gap: 2px; }
.tool svg { width: 17px; height: 17px; }
.tool:disabled { color: #b5b5b5; }
.tool span { text-align: center; }
.w24 { width: 24px; } .w26 { width: 26px; } .w32 { width: 32px; } .w36 { width: 36px; }
.w40 { width: 40px; } .w44 { width: 44px; } .w48 { width: 48px; } .w60 { width: 60px; }
.stack { display: flex; flex-direction: column; gap: 4px; padding-left: 1px; }
.stack button { justify-content: flex-start; gap: 1px; height: 8px; }
.stack svg { width: 9px; height: 9px; }
.stack .caret { margin-left: 3px; }

.doctabs { height: 11px; padding: 1px 0 0 14px; background: #e4e4e4; }
.doctab { display: flex; align-items: center; justify-content: space-between; width: 63px; height: 10px; padding: 0 3px 0 18px; background: linear-gradient(135deg, transparent 6px, #fdfdfd 6px); border-right: 1px solid #bbb; color: #222; }
.doctab span { font-weight: 700; }
.doctab svg { width: 5px; height: 5px; }

.work { display: flex; flex: 1; min-height: 0; background: #e4e4e4; }
.sidebar { display: flex; flex-direction: column; align-items: center; width: 14px; padding-top: 75px; border-right: 1px solid #c9c9c9; background: linear-gradient(#e6e6e6 74px, #efefef 74px 391px, #e6e6e6 391px); }
.sidebar button { height: 12px; flex: none; }
.sidebar svg { width: 10px; height: 10px; }
.sidebar hr { width: 11px; margin: 1px 0; border: 0; border-top: 1px solid #ccc; }
.grip { width: 8px; height: 1px; margin: 2px 0; border-top: 1px dotted #888; }
.left { margin: 1px 5px 1px 0; border: 2px solid transparent; border-right-color: #444; border-left: 0; }

.panel { display: flex; flex-direction: column; width: 86px; }
.phead { display: flex; align-items: center; height: 13px; padding: 0 2px; gap: 7px; }
.phead h2 { margin-right: auto; }
.phead svg { width: 6px; height: 6px; }
.psearch { display: flex; height: 11px; margin-bottom: 1px; }
.psearch input { flex: 1; min-width: 0; padding: 0 2px; background: #fff; }
.psearch input::placeholder { color: #555; }
.psearch button { width: 11px; }
.psearch .clear { background: #f1d7d7; border: 1px solid #caa; color: #d33b32; width: 9px; }
.psearch svg { width: 8px; height: 8px; }
.tree { flex: 1; min-height: 0; background: #fff; border: 1px solid #9a9ca8; overflow: hidden; color: #111; font-family: "Open Sans", sans-serif; font-size: 6px; }
.tree li { display: flex; align-items: center; gap: 3px; height: 10px; padding-left: 3px; white-space: nowrap; }
.tree .root { padding-left: 1px; }
.tree svg { width: 9px; height: 9px; }
.exp { display: grid; place-items: center; width: 6px; height: 6px; border: 1px solid #abb8c6; background: #eef4fa; }
.exp::after { content: ""; width: 2px; height: 1px; background: #345; }
.leaf { width: 6px; height: 1px; border-top: 1px dotted #999; }
.hscroll { display: flex; align-items: center; gap: 2px; height: 10px; padding: 0 4px; background: #f0f0f0; border: 1px solid #9a9ca8; border-top: 0; }
.thumb { width: 26px; height: 8px; background: #cdcdcd; }
.arr { width: 3px; height: 3px; border: solid #444; border-width: 0 0 1px 1px; transform: rotate(45deg); }
.arr.r { margin-left: auto; transform: rotate(225deg); }
.ptabs { display: flex; height: 13px; }
.ptabs button { flex: 1; gap: 1px; padding-bottom: 1px; }
.ptabs .active { background: #fff; height: 11px; border: 1px solid #bbb; border-top: 0; }
.ptabs svg { width: 8px; height: 8px; }

.viewport { flex: 1; min-width: 0; margin-left: 3px; background: linear-gradient(#d4d4d4, #f1f1f1); }
.viewport svg { width: 100%; height: 100%; }
.dims { font-family: "Noto Sans CJK JP", sans-serif; font-size: 11px; fill: #111; }
.dims .cyan { fill: #14eef0; }
.axis { font-size: 6px; font-weight: 700; }

.shapes { height: 17px; padding: 2px 4px; border-bottom: 1px solid #d9d9d9; background: #e6e6e6; }
.shapes button { gap: 2px; height: 10px; }
.shapes svg { width: 8px; height: 8px; }
.shapes::after { content: ""; display: block; width: 29px; height: 2px; margin-top: 1px; background: #cfcfcf; }

.status { display: flex; align-items: center; height: 12px; padding: 0 2px; background: #fafafa; }
.status a { color: #1466c0; }
.size { margin-left: auto; }
.units { display: flex; gap: 3px; padding-left: 7px; align-items: center; }
.units b { font-weight: 700; }
.units svg { width: 7px; height: 7px; }
.mm { padding: 0 3px 0 4px; }
.sicons { display: flex; }
.sicons button { gap: 1px; min-width: 12px; height: 11px; padding: 0 1px; }
.sicons .caret { margin-right: 2px; }
.sicons .on { background: #ccc; }
.sicons .dim { opacity: 0.4; }
.sicons svg { width: 9px; height: 9px; }
.status select { height: 11px; appearance: none; padding: 0 1px; border: 1px solid #d5d5d5; color: #222; background: linear-gradient(#555, #555) right 2px center / 3px 1px no-repeat #fff; }
.status .drill { width: 75px; }
.status .config { width: 97px; }
.org { margin-left: 2px; }
.org svg { width: 9px; height: 9px; }
```
